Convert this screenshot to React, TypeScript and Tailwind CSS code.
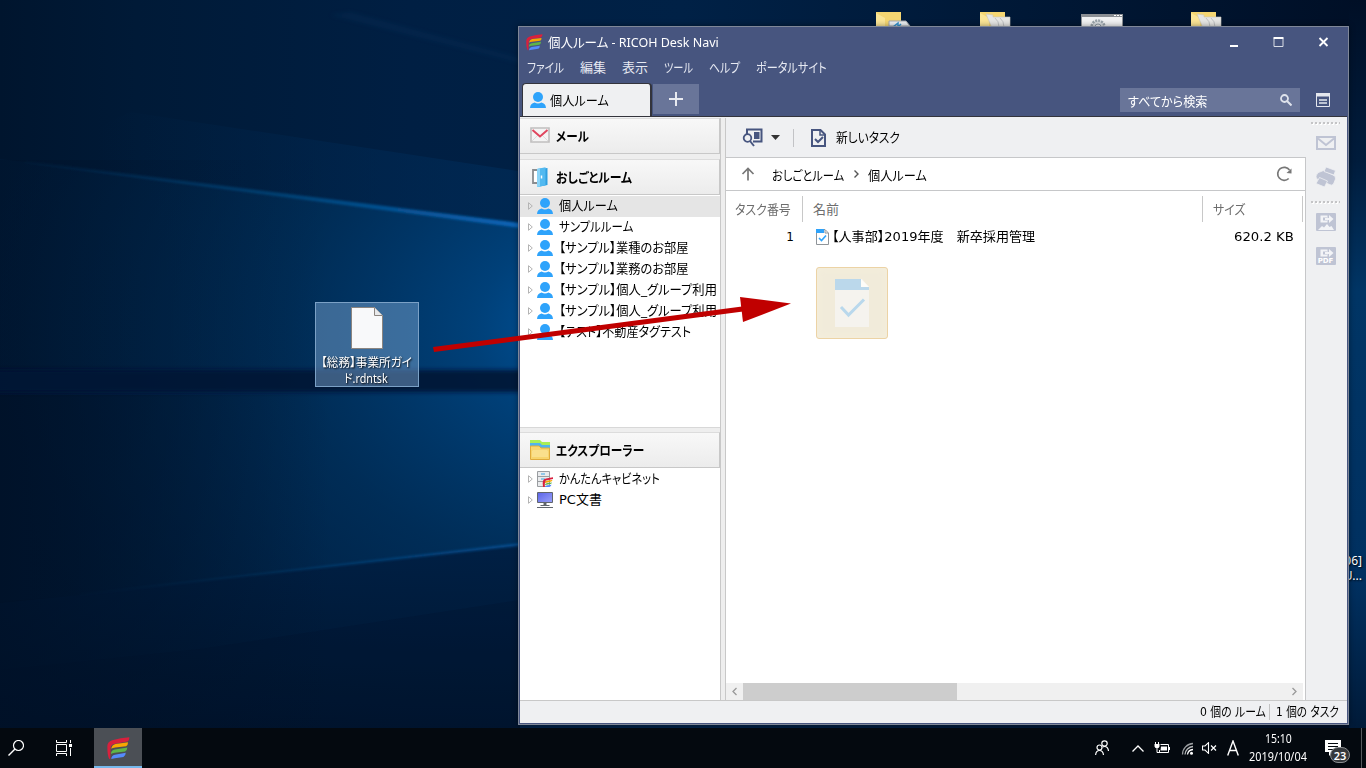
import { useLayoutEffect, useRef, useState } from 'react';
import type { ReactNode } from 'react';

type FitProps = { w: number; children: ReactNode; className?: string };

// Condenses its label horizontally so it takes exactly w pixels, like the narrow kana of a UI font
const Fit = ({ w, children, className = '' }: FitProps) => {
  const ref = useRef<HTMLSpanElement>(null);
  const [scale, setScale] = useState(1);

  useLayoutEffect(() => {
    if (ref.current) setScale(w / ref.current.offsetWidth);
  }, [w, children]);

  return (
    <span className={`block shrink-0 ${className}`} style={{ width: w }}>
      <span
        ref={ref}
        className="inline-block origin-left whitespace-pre align-top [font-feature-settings:'palt']"
        style={{ transform: `scaleX(${scale})` }}
      >
        {children}
      </span>
    </span>
  );
};

const Logo = ({ className = '' }: { className?: string }) => (
  <svg viewBox="320 50 70 70" className={className}>
    <path d="M327 117Q321 108 321 78Q321 65 336 60Q362 53 388 51Q388 62 382 64L342 71Q331 73 331 84L330 117Z" fill="#d9203d" />
    <path d="M333 86Q334 74 346 71L384 66Q384 76 378 78L345 82Q337 83 333 86Z" fill="#f9a602" />
    <path d="M332 102Q332 90 344 88L382 82Q381 92 375 94L344 98Q336 99 332 102Z" fill="#5fb548" />
    <path d="M333 117Q333 106 344 104L377 98Q377 108 370 111L344 115Z" fill="#558bfb" />
  </svg>
);

const UserIcon = () => (
  <svg viewBox="0 0 16 16" className="h-4 w-4 shrink-0">
    <circle cx="8" cy="5" r="5" fill="#2ea3fb" />
    <path d="M0 16Q.4 11.4 4.6 10.6Q8 12.4 11.4 10.6Q15.6 11.4 16 16Z" fill="#2ea3fb" />
  </svg>
);

const CabinetIcon = () => (
  <svg viewBox="0 0 16 16" className="h-4 w-4 shrink-0">
    <path d="M.5.5h12v15H.5z" fill="#e9ebed" stroke="#9a9da1" />
    <path d="M.5 5.500h12M.5 10.500h12" stroke="#9a9da1" />
    <path d="M4 3h4M4 8h4" stroke="#3aa6e8" strokeWidth="1.2" />
    <path d="M6 16Q4.500 7.800 9 7.500L16 6.300V8L9 9.500Q7.600 10 7.800 16Z" fill="#d9203d" />
    <path d="M8 11Q9 9.600 11 9.500L15.500 9Q15 10.600 13.500 10.800L8 12Z" fill="#f9a602" />
    <path d="M8 13.500Q9 11.800 11 12L15 11.400Q14.500 13 13 13.100L8 14Z" fill="#5fb548" />
    <path d="M8 16Q9 14 11 14.200L14.500 13.800Q14 15.600 12 16Z" fill="#558bfb" />
  </svg>
);

const MonitorIcon = () => (
  <svg viewBox="0 0 16 16" className="h-4 w-4 shrink-0">
    <defs>
      <linearGradient id="screen" x1="0" y1="0" x2="1" y2="1">
        <stop offset="0" stopColor="#5a63e8" />
        <stop offset="1" stopColor="#9aa2fa" />
      </linearGradient>
    </defs>
    <path d="M.5.5h15v10H.5z" fill="url(#screen)" stroke="#60656c" />
    <path d="M6.500 11h3v2.500h-3z" fill="#60656c" />
    <path d="M3.500 13.500h9M0 15.500h16" stroke="#60656c" />
  </svg>
);

const DottedLine = () => (
  <svg viewBox="0 0 29 3" className="h-[3px] w-[29px] shrink-0">
    <path d="M0 2h29" stroke="#fff" strokeWidth="2" strokeDasharray="2 2" strokeDashoffset="-1" />
    <path d="M0 1h29" stroke="#c4c4c6" strokeWidth="2" strokeDasharray="2 2" />
  </svg>
);

const rooms = [
  { name: '個人ルーム', w: 59 },
  { name: 'サンプルルーム', w: 74 },
  { name: '【サンプル】業種のお部屋', w: 130 },
  { name: '【サンプル】業務のお部屋', w: 130 },
  { name: '【サンプル】個人_グループ利用', w: 158 },
  { name: '【サンプル】個人_グループ利用', w: 158 },
  { name: '【テスト】不動産タグテスト', w: 132 },
];

const menus = [
  { name: 'ファイル', w: 37 },
  { name: '編集', w: 26 },
  { name: '表示', w: 26 },
  { name: 'ツール', w: 29 },
  { name: 'ヘルプ', w: 31 },
  { name: 'ポータルサイト', w: 71 },
];

const TreeRow = ({ icon, name, w, active }: { icon: ReactNode; name: string; w: number; active?: boolean }) => (
  <div className={`flex h-[21px] items-center pb-px pl-2 ${active ? 'bg-[#e5e5e5]' : ''}`}>
    <svg viewBox="0 0 5 8" className="mr-1 h-2 w-[5px] shrink-0">
      <path d="M.5.700V7.300L4.300 4Z" fill="none" stroke="#b4b4b4" />
    </svg>
    {icon}
    <Fit w={w} className="ml-[6px]">{name}</Fit>
  </div>
);

const PanelHeader = ({ icon, name, w }: { icon: ReactNode; name: string; w: number }) => (
  <div className="flex h-9 shrink-0 items-center border-r border-b border-t border-t-[#dcdcdc] border-r-[#c8c8c8] border-b-[#c8c8c8] bg-linear-to-b from-[#f8f8f8] to-[#ececec] pl-[10px]">
    {icon}
    <Fit w={w} className="mt-px ml-[6px] font-bold">{name}</Fit>
  </div>
);

const Wallpaper = () => (
  <svg viewBox="0 0 1366 768" className="absolute inset-0 h-full w-full">
    <defs>
      <linearGradient id="base" x1="0" x2="1366" y1="0" y2="0" gradientUnits="userSpaceOnUse">
        <stop offset="0" stopColor="#00152e" />
        <stop offset=".1" stopColor="#001a37" />
        <stop offset=".3" stopColor="#001f43" />
        <stop offset=".5" stopColor="#002146" />
        <stop offset="1" stopColor="#000f26" />
      </linearGradient>
      <radialGradient id="glow" cx="600" cy="330" r="620" gradientUnits="userSpaceOnUse" gradientTransform="translate(0 66) scale(1 .8)">
        <stop offset="0" stopColor="#0058a4" />
        <stop offset=".2" stopColor="#00447f" stopOpacity=".9" />
        <stop offset=".5" stopColor="#003360" stopOpacity=".7" />
        <stop offset="1" stopColor="#002448" stopOpacity=".2" />
      </radialGradient>
      <linearGradient id="beam" x1="25" x2="518" y1="0" y2="0" gradientUnits="userSpaceOnUse">
        <stop offset="0" stopColor="#0a4f8c" stopOpacity=".1" />
        <stop offset=".5" stopColor="#07497f" stopOpacity=".8" />
        <stop offset="1" stopColor="#0864b6" />
      </linearGradient>
      <linearGradient id="haze" x1="100" x2="518" y1="0" y2="0" gradientUnits="userSpaceOnUse">
        <stop offset="0" stopColor="#003466" stopOpacity="0" />
        <stop offset="1" stopColor="#003466" stopOpacity=".9" />
      </linearGradient>
      <linearGradient id="low" x1="0" x2="0" y1="540" y2="728" gradientUnits="userSpaceOnUse">
        <stop offset="0" stopColor="#002045" />
        <stop offset="1" stopColor="#00142c" />
      </linearGradient>
      <linearGradient id="shade" x1="0" x2="330" y1="0" y2="0" gradientUnits="userSpaceOnUse">
        <stop offset="0" stopColor="#001026" stopOpacity=".75" />
        <stop offset="1" stopColor="#001026" stopOpacity="0" />
      </linearGradient>
      <linearGradient id="strip" x1="0" x2="0" y1="0" y2="728" gradientUnits="userSpaceOnUse">
        <stop offset="0" stopColor="#000f26" />
        <stop offset=".22" stopColor="#001c3c" />
        <stop offset=".4" stopColor="#003565" />
        <stop offset=".8" stopColor="#003060" />
        <stop offset="1" stopColor="#001a38" />
      </linearGradient>
      <filter id="soft"><feGaussianBlur stdDeviation="1" /></filter>
      <filter id="band" x="-5%" y="-50%" width="110%" height="200%"><feGaussianBlur stdDeviation="2" /></filter>
    </defs>
    <rect width="1366" height="768" fill="url(#base)" />
    <path d="M130 112L518 171V226L25 162Z" fill="url(#haze)" opacity=".45" />
    <path d="M330 15L520 63V58L350 12Z" fill="#07305c" opacity=".3" filter="url(#band)" />
    <path d="M0 159L25 162L520 226V545L80 595L0 602Z" fill="url(#glow)" />
    <path d="M25 161L520 223V228L25 163Z" fill="url(#beam)" filter="url(#soft)" />
    <path d="M0 603L80 595L520 545V768H0Z" fill="url(#low)" opacity=".85" />
    <path d="M80 594L520 543V546L80 595Z" fill="url(#beam)" opacity=".55" filter="url(#soft)" />
    <path d="M200 649L520 600V768H0V670Z" fill="#001128" opacity=".2" />
    <rect y="395" width="330" height="335" fill="url(#shade)" />
    <rect y="160" width="330" height="235" fill="url(#shade)" opacity=".4" />
    <rect x="-10" y="370" width="540" height="22" fill="#001835" opacity=".9" filter="url(#band)" />
    <rect x="1349" width="17" height="768" fill="url(#strip)" />

    {/* Icons partly covered by the window */}
    {[876, 980, 1191].map((x, i) => (
      <g key={x}>
        <path d={`M${x} 12h25v16h-25z`} fill="#f5d672" />
        <path d={`M${x} 13l9 5v10h-9z`} fill="#fbe596" />
        {i === 0 ? (
          <path d={`M${x + 13} 21h17l4 5h-21z`} fill="#eef1f4" stroke="#a5a8ac" />
        ) : (
          <path d={`M${x + 6} 14l7 1v2h17v11h-18z`} fill="#e6e6e4" stroke="#c9c6bd" strokeWidth=".6" />
        )}
        {i === 0 && <path d={`M${x + 17} 27l5-4v4l3-3`} stroke="#2f91cf" strokeWidth="1.500" fill="none" />}
        {i > 0 && <path d={`M${x + 15} 18q4 3 4 9M${x + 20} 18q4 3 4 9`} stroke="#bfc1c2" fill="none" />}
      </g>
    ))}
    <path d="M1081.500 14.500h41v13h-41z" fill="#f1f2f3" stroke="#8b8f94" />
    <path d="M1081 14h42v3h-42z" fill="#8b8f94" />
    <path d="M1114 15.500h8" stroke="#fff" strokeDasharray="2 1" />
    <circle cx="1098" cy="27" r="6.500" fill="#d8dde0" stroke="#9aa4ab" strokeWidth="2.500" strokeDasharray="2 1" />
    <circle cx="1098" cy="27" r="3" fill="#f1f2f3" stroke="#8e9aa3" />
  </svg>
);

const TitleBar = () => (
  <div className="flex h-[30px] items-center pl-[7px] text-white">
    <Logo className="mr-[5px] h-[17px] w-[17px]" />
    <Fit w={171} className="font-['Noto_Sans','Noto_Sans_CJK_JP',sans-serif]">個人ルーム - RICOH Desk Navi</Fit>
    <svg viewBox="0 0 99 12" className="mr-[19px] ml-auto h-3 w-[99px]">
      <path d="M0 10h8" stroke="#fff" strokeWidth="2" />
      <path d="M44 2.500h9v8h-9z" fill="none" stroke="#d9dde6" />
      <path d="M43.500 2h10" stroke="#fff" strokeWidth="2" />
      <path d="M89.500 2l8 8M97.500 2l-8 8" stroke="#fff" strokeWidth="1.800" />
    </svg>
  </div>
);

const TabBar = () => (
  <div className="flex h-[33px] items-end">
    <div className="flex h-[33px] w-[130px] items-center rounded-t-sm border-r-2 border-t border-l border-[#33343c] bg-[#eff0f2] pl-[7px] text-black">
      <UserIcon />
      <Fit w={59} className="mt-px ml-1">個人ルーム</Fit>
    </div>
    <div className="mb-[2px] ml-px flex h-[30px] w-[46px] items-center justify-center bg-[#697599]">
      <svg viewBox="0 0 14 14" className="h-[14px] w-[14px]">
        <path d="M7 0v14M0 7h14" stroke="#e8eaf0" strokeWidth="2" />
      </svg>
    </div>
    <div className="mb-1 ml-auto flex h-6 w-[180px] items-center justify-between bg-[#697599] pr-2 pl-[8px] text-white">
      <Fit w={79} className="mt-1">すべてから検索</Fit>
      <svg viewBox="0 0 12 12" className="h-3 w-3">
        <circle cx="4.500" cy="4.500" r="3.500" fill="none" stroke="#dfe3ec" strokeWidth="1.800" />
        <path d="M7 7l4.500 4.500" stroke="#dfe3ec" strokeWidth="2" />
      </svg>
    </div>
    <svg viewBox="0 0 14 14" className="mr-[18px] mb-[9px] ml-4 h-[14px] w-[14px]">
      <path d="M.5.5h13v13H.5z" fill="none" stroke="#e4e7ee" />
      <path d="M0 0h14v3.500H0z" fill="#e4e7ee" />
      <path d="M3 7h8M3 10h8" stroke="#e4e7ee" strokeWidth="1.500" />
    </svg>
  </div>
);

const Sidebar = () => (
  <aside className="flex w-[201px] shrink-0 flex-col border-r border-[#c8c8c8] bg-white">
    <PanelHeader
      name="メール"
      w={33}
      icon={
        <svg viewBox="0 0 20 16" className="mb-0.5 h-4 w-5">
          <path d="M1 1h18v14H1z" fill="#f4f4f4" stroke="#c0bebe" strokeWidth="1.600" />
          <path d="M2 14l6-6M18 14l-6-6" stroke="#dcdcdc" />
          <path d="M2.500 3L10 9.500L17.500 3" fill="none" stroke="#e0465e" strokeWidth="2" />
        </svg>
      }
    />
    <div className="h-[5px] shrink-0 bg-[#eee]" />
    <PanelHeader
      name="おしごとルーム"
      w={76}
      icon={
        <svg viewBox="0 0 20 20" className="h-5 w-5">
          <path d="M3 3h12v13H3z" fill="#fff" stroke="#8a8d90" strokeWidth="1.800" />
          <path d="M7 2L17.500 1V18L7 20Z" fill="#2f9fe0" />
          <path d="M7 2L15.500 .3V18.500L7 20Z" fill="#52b9f0" />
          <path d="M7 2L10 1.400V19.500L7 20Z" fill="#8ad4f8" />
          <path d="M11.500 8.500v3" stroke="#fff" strokeWidth="1.500" />
        </svg>
      }
    />
    <div className="h-[232px] shrink-0 overflow-hidden pt-px">
      {rooms.map((room, i) => (
        <TreeRow key={i} icon={<UserIcon />} name={room.name} w={room.w} active={i === 0} />
      ))}
    </div>
    <div className="h-[5px] shrink-0 border-t border-[#d8d8d8] bg-[#eee]" />
    <PanelHeader
      name="エクスプローラー"
      w={88}
      icon={
        <svg viewBox="0 0 20 20" className="mb-px h-5 w-5">
          <path d="M0 0h10l2 2h8v5H0z" fill="#a9ee55" />
          <path d="M0 3h10l2 2h8v4H0z" fill="#4fb4ee" />
          <path d="M.5 6h8.500l2 2h8.500v11.500H.5z" fill="#f7d56d" stroke="#dfab3c" />
          <path d="M2 11l1-1h14l1 1v6H2z" fill="#fae08c" />
        </svg>
      }
    />
    <div className="pt-px">
      <TreeRow icon={<CabinetIcon />} name="かんたんキャビネット" w={101} />
      <TreeRow icon={<MonitorIcon />} name="PC文書" w={43} />
    </div>
  </aside>
);

const Toolbar = () => (
  <div className="flex h-[39px] shrink-0 items-center bg-[#eff0f2] pl-[17px]">
    <svg viewBox="0 0 21 19" className="-ml-px h-[19px] w-[21px]">
      <path d="M5 6V1.500h14.500v12H11" fill="none" stroke="#47557f" strokeWidth="2" />
      <path d="M12 4h5.500v7H12z" fill="#47557f" />
      <circle cx="5.500" cy="10" r="3.800" fill="#eff0f2" stroke="#47557f" strokeWidth="1.800" />
      <path d="M8 13l4 5" stroke="#47557f" strokeWidth="2" />
    </svg>
    <svg viewBox="0 0 9 5" className="ml-2 h-[5px] w-[9px]">
      <path d="M0 0h9L4.500 5Z" fill="#333" />
    </svg>
    <div className="mr-[17px] ml-[13px] h-[18px] w-px bg-[#c2c3c6]" />
    <svg viewBox="0 0 15 18" className="h-[18px] w-[15px]">
      <path d="M1 1h8.500l4.500 4.500V17H1z" fill="none" stroke="#47557f" strokeWidth="2" />
      <path d="M9 1v5h5" fill="none" stroke="#47557f" strokeWidth="1.500" />
      <path d="M4 10l3 3 5-5" fill="none" stroke="#47557f" strokeWidth="2" />
    </svg>
    <Fit w={64} className="mt-px ml-[10px]">新しいタスク</Fit>
  </div>
);

const AddressBar = () => (
  <div className="flex h-[34px] shrink-0 items-center border-t border-r border-b border-[#c6c7c9] bg-white pl-[15px]">
    <svg viewBox="0 0 14 14" className="h-[14px] w-[14px]">
      <path d="M7 13.500V1.500M1.500 7L7 1.500L12.500 7" fill="none" stroke="#777" strokeWidth="1.700" />
    </svg>
    <Fit w={72} className="mt-[3px] ml-[17px]">おしごとルーム</Fit>
    <svg viewBox="0 0 5 8" className="mr-[9px] ml-[10px] h-2 w-[5px]">
      <path d="M.5.5L4 4L.5 7.500" fill="none" stroke="#555" strokeWidth="1.400" />
    </svg>
    <Fit w={59} className="mt-[3px]">個人ルーム</Fit>
    <svg viewBox="0 0 16 16" className="mr-[13px] ml-auto h-4 w-4">
      <path d="M13.500 4A6.500 6.500 0 1 0 12.700 12.500" fill="none" stroke="#777" strokeWidth="1.700" />
      <path d="M15.500 2.500V7.500L10.500 7Z" fill="#777" />
    </svg>
  </div>
);

const TaskList = () => (
  <div className="flex min-h-0 flex-1 flex-col border-r border-[#c6c7c9] bg-white">
    <div className="mt-[5px] flex h-[26px] w-[577px] shrink-0 text-[#6d6d6d]">
      <div className="flex w-[77px] items-center border-r border-[#c8c8c8] pt-0.5 pl-[9px]"><Fit w={56}>タスク番号</Fit></div>
      <div className="flex w-[400px] items-center border-r border-[#c8c8c8] pt-0.5 pl-[10px]"><Fit w={26}>名前</Fit></div>
      <div className="flex w-[100px] items-center border-r border-[#c8c8c8] pt-0.5 pl-[10px]"><Fit w={32}>サイズ</Fit></div>
    </div>
    <div className="mt-[5px] flex h-5 items-center">
      <span className="w-[69px] pr-px text-right text-xs">1</span>
      <svg viewBox="0 0 13 16" className="ml-[21px] h-4 w-[13px]">
        <path d="M.5.5h8.500l3.500 3.500v11.500H.5z" fill="#fff" stroke="#8f9499" />
        <path d="M0 0h8v4H0z" fill="#2ea3fb" />
        <path d="M9 1v3h3" fill="none" stroke="#8f9499" />
        <path d="M3 9l2.500 2.500L10 6.500" fill="none" stroke="#2ea3fb" strokeWidth="1.600" />
      </svg>
      <Fit w={203} className="ml-[3px]">【人事部】2019年度　新卒採用管理</Fit>
      <Fit w={60} className="mr-[11px] ml-auto">620.2 KB</Fit>
    </div>
    {/* Drag preview of the dropped file */}
    <div className="mt-5 ml-[90px] flex h-[72px] w-[72px] items-center justify-center rounded-[3px] border border-[#ecd3a5] bg-[#f1ebda] shadow-[inset_0_0_8px_#f5efdc]">
      <svg viewBox="0 0 36 48" className="h-12 w-9">
        <path d="M1 0h27l7 8v40H1z" fill="#f5f3ee" />
        <path d="M1 0h26v8h8v3H1z" fill="#bbd8eb" />
        <path d="M27 0v8h8Z" fill="#fdfcf8" />
        <path d="M7 28l7.500 8L30 20.500" fill="none" stroke="#b9d8ec" strokeWidth="3" />
      </svg>
    </div>
    <div className="mt-auto mr-[2px] flex h-[17px] items-center bg-[#f0f0f0]">
      <svg viewBox="0 0 17 17" className="h-[17px] w-[17px]">
        <path d="M10.500 5L7 8.500L10.500 12" fill="none" stroke="#999" strokeWidth="1.300" />
      </svg>
      <div className="h-full w-[214px] bg-[#cdcdcd]" />
      <svg viewBox="0 0 17 17" className="ml-auto h-[17px] w-[17px]">
        <path d="M6.500 5L10 8.500L6.500 12" fill="none" stroke="#999" strokeWidth="1.300" />
      </svg>
    </div>
  </div>
);

const ExportIcon = ({ pdf }: { pdf?: boolean }) => (
  <span className="relative block h-[18px] w-5">
    <svg viewBox="0 0 20 18" className="h-[18px] w-5">
      <rect width="20" height="18" rx="1" fill="#bfc4d4" />
      <path d="M4.500 2.500h7v7h-7z" fill="#f3f4f7" />
      <path d="M7 4.500h4v3H7z" fill="#bfc4d4" />
      <path d="M9 6h5" stroke="#f3f4f7" strokeWidth="2" />
      <path d="M13 2v8l4.500-4z" fill="#f3f4f7" />
      {!pdf && <path d="M2 17l4-4 2 1.500 3-3.500 2.500 3 2-1 2.500 4z" fill="#f3f4f7" />}
    </svg>
    {pdf && (
      <span className="absolute bottom-0 left-0 w-5 text-center text-[7px] leading-[8px] font-bold text-white">PDF</span>
    )}
  </span>
);

const SideTools = () => (
  <aside className="flex w-[41px] shrink-0 flex-col items-center bg-[#eff0f2] pt-[4px] pr-[2px]">
    <DottedLine />
    <svg viewBox="0 0 20 14" className="mt-[11px] h-[14px] w-5">
      <path d="M1 1h18v12H1z" fill="none" stroke="#bfc4d4" strokeWidth="2" />
      <path d="M2 2.500L10 9L18 2.500" fill="none" stroke="#bfc4d4" strokeWidth="2" />
    </svg>
    <svg viewBox="0 0 20 20" className="mt-[17px] h-5 w-5">
      <g fill="#bfc4d4" stroke="#eff0f2" strokeWidth=".8">
        <path d="M0 9Q1 5 5 4.500L7.500 3.500L17 8Q20 9 19.500 12L17.500 17Q16 19 13.500 17.500L3 13Q-.5 12 0 9Z" />
        <path d="M10 0L19.500 3.500L18 8L8 4.500Z" />
        <path d="M3.500 10.500L11.500 14L8.500 20L0 16.500Z" />
      </g>
    </svg>
    <div className="mt-[14px]"><DottedLine /></div>
    <div className="mt-[9px]"><ExportIcon /></div>
    <div className="mt-4"><ExportIcon pdf /></div>
  </aside>
);

const AppWindow = () => (
  <div className="absolute top-[26px] left-[518px] flex h-[699px] w-[831px] flex-col border border-[#7f8798] bg-[#47557f] text-[13px] leading-[18px] text-black shadow-[0_0_6px_rgba(0,0,0,0.4)]">
    <TitleBar />
    <nav className="flex h-[26px] gap-[16px] pt-0.5 pl-2 text-[#e6e9f2]">
      {menus.map((menu) => (
        <Fit key={menu.name} w={menu.w}>{menu.name}</Fit>
      ))}
    </nav>
    <div className="pl-[3px]"><TabBar /></div>
    <div className="mx-px mb-px flex min-h-0 flex-1 flex-col border-t border-[#33343c] bg-[#eff0f2]">
      <div className="flex min-h-0 flex-1 pt-px">
        <Sidebar />
        <div className="w-[5px] shrink-0 border-r border-[#c8c8c8] bg-[#eee]" />
        <main className="flex min-w-0 flex-1">
          <div className="flex w-[580px] shrink-0 flex-col">
            <Toolbar />
            <AddressBar />
            <TaskList />
          </div>
          <SideTools />
        </main>
      </div>
      <footer className="flex h-[23px] shrink-0 items-center justify-end border-t border-[#c8c8c8] pr-2">
        <Fit w={66}>0 個の ルーム</Fit>
        <div className="mr-[6px] ml-[3px] h-4 w-px bg-[#c2c2c2]" />
        <Fit w={63}>1 個の タスク</Fit>
      </footer>
    </div>
  </div>
);

const DesktopFile = () => (
  <div className="absolute top-[302px] left-[315px] flex h-[85px] w-[104px] flex-col items-center border border-[#7ba1c6] bg-[#82afdc]/45 pt-1 text-[12px] leading-[15px] text-white [text-shadow:1px_1px_2px_#000]">
    <svg viewBox="0 0 32 42" className="mb-[7px] h-[42px] w-8 shrink-0">
      <path d="M.5.5h23l8 8v33H.5z" fill="#f8f9fa" stroke="#8b8580" />
      <path d="M23.500.5v8h8" fill="#e8e9ea" stroke="#8b8580" />
    </svg>
    <Fit w={91} className="mr-0.5">【総務】事業所ガイ</Fit>
    <Fit w={44} className="mr-0.5 font-['Noto_Sans','Noto_Sans_CJK_JP',sans-serif]">ド.rdntsk</Fit>
  </div>
);

const Taskbar = () => (
  <footer className="absolute inset-x-0 bottom-0 flex h-10 items-center bg-[#04090f] font-['Noto_Sans',sans-serif] text-white">
    <svg viewBox="0 0 16 16" className="ml-2 h-4 w-4">
      <circle cx="10.500" cy="5.500" r="5" fill="none" stroke="#fff" strokeWidth="1.200" />
      <path d="M7 9L.5 15.500" stroke="#fff" strokeWidth="1.400" />
    </svg>
    <svg viewBox="0 0 16 16" className="ml-8 h-4 w-4">
      <path d="M.5 4.500h10v7H.5zM.5 0v2.500h10V0M.5 16v-2.500h10V16M14.500 0v3M14.500 8v8" fill="none" stroke="#fff" />
      <path d="M13 4h3v3h-3z" fill="#fff" />
    </svg>
    <div className="ml-[22px] flex h-10 w-12 items-center justify-center border-b-2 border-[#76b9ed] bg-[#4b4f55]">
      <Logo className="mt-[2px] h-[23px] w-[23px]" />
    </div>
    <svg viewBox="0 0 14 16" className="ml-auto h-4 w-[14px]">
      <g fill="none" stroke="#fff" strokeWidth="1.200">
        <circle cx="9.500" cy="3.500" r="2.700" />
        <path d="M13.500 11Q13 6.500 9.500 6.500Q8.500 6.500 7.500 7" />
        <circle cx="4.500" cy="7.500" r="2.500" />
        <path d="M.6 15Q1 10.500 4.500 10.500Q8 10.500 8.500 15" />
      </g>
    </svg>
    <svg viewBox="0 0 12 7" className="ml-[23px] h-[7px] w-3">
      <path d="M.5 6.500L6 1L11.500 6.500" fill="none" stroke="#fff" strokeWidth="1.300" />
    </svg>
    <svg viewBox="0 0 16 13" className="ml-[10px] h-[13px] w-4">
      <path d="M6.500 2.500h8v8h-9V8" fill="none" stroke="#fff" />
      <path d="M7 4.500h6v4H6.500zM15 5h1v3h-1zM.5 2h5v2.500l-1 1.500h-3l-1-1.500zM1.500 0v2M4.500 0v2" fill="#fff" />
      <path d="M1.500 0v2M4.500 0v2M3 5v5.500h3" fill="none" stroke="#fff" />
    </svg>
    <svg viewBox="0 0 13 13" className="ml-[11px] h-[13px] w-[13px]">
      <g fill="none" strokeWidth="1.300">
        <path d="M1.500 12.500A11 11 0 0 1 12 1.500" stroke="#9a9da0" />
        <path d="M4 12.500A8.500 8.500 0 0 1 12 4.500" stroke="#b8babc" />
        <path d="M6.500 12.500A6 6 0 0 1 12 7.500" stroke="#fff" />
      </g>
      <circle cx="10.500" cy="11.200" r="1.500" fill="#fff" />
    </svg>
    <svg viewBox="0 0 15 12" className="ml-2 h-3 w-[15px]">
      <path d="M.5 4h2.500L6.500.7V11.300L3 8H.5z" fill="none" stroke="#fff" strokeWidth="1.100" />
      <path d="M9 3.500l5 5M14 3.500l-5 5" stroke="#fff" strokeWidth="1.200" />
    </svg>
    <svg viewBox="0 0 12 16" className="ml-[10px] h-4 w-3">
      <path d="M.7 15.500L6 1L11.300 15.500M2.700 10.500h6.600" fill="none" stroke="#fff" strokeWidth="1.400" />
    </svg>
    <div className="ml-[9px] flex w-[60px] flex-col items-center text-[12px] leading-[18px]">
      <Fit w={27}>15:10</Fit>
      <Fit w={58}>2019/10/04</Fit>
    </div>
    <div className="relative ml-[17px] h-4 w-4">
      <svg viewBox="0 0 16 16" className="h-4 w-4">
        <path d="M0 0h16v12H8L4 16v-4H0z" fill="#fff" />
        <path d="M3 3.500h10M3 6.500h10M3 9.500h6" stroke="#04090f" />
      </svg>
      <div className="absolute top-[7px] left-[5px] flex h-4 w-5 items-center justify-center rounded-full border border-[#8a8d90] bg-[#35383c] text-[11px] leading-none font-semibold">
        23
      </div>
    </div>
    <div className="mr-1 ml-5 h-full w-px bg-[#55595d]" />
  </footer>
);

const App = () => (
  <div className="relative h-[768px] w-[1366px] overflow-hidden bg-[#001a37] font-['DejaVu_Sans','Noto_Sans_CJK_JP',sans-serif]">
    <Wallpaper />
    <div className="absolute top-[553px] right-[4px] text-right font-['Noto_Sans',sans-serif] text-[12px] leading-[15px] text-white [text-shadow:1px_1px_2px_#000]">
      <div>006]</div>
      <div>U...</div>
    </div>
    <DesktopFile />
    <AppWindow />
    <Taskbar />

    {/* Drag direction arrow */}
    <svg viewBox="0 0 362 60" className="absolute top-[294px] left-[430px] h-[60px] w-[362px]">
      <path d="M3 53L312 12.500L313 17.500L4 58Z" fill="#c00000" />
      <path d="M310 3L361 9.500L313 28Z" fill="#c00000" />
    </svg>
  </div>
);

export default App;
